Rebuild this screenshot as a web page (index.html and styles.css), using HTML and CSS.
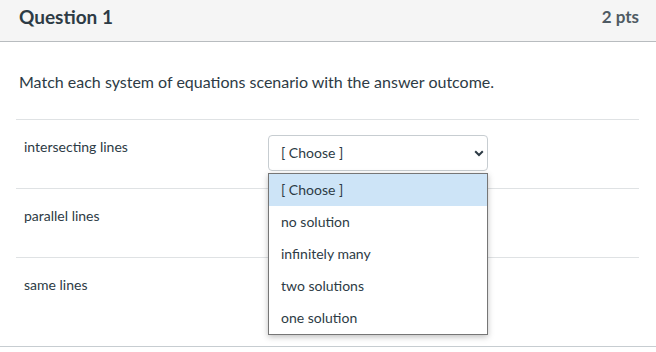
FILE: index.html
```html
<!DOCTYPE html>
<html lang="en">
<head>
    <meta charset="UTF-8">
    <meta name="viewport" content="width=device-width, initial-scale=1.0">
    <title>Question 1</title>
    <link rel="stylesheet" href="styles.css">
</head>
<body>
    <div class="question">
        <div class="question-header">
            <h2>Question 1</h2>
            <span class="points">2 pts</span>
        </div>

        <div class="question-body">
            <p class="question-text">Match each system of equations scenario with the answer outcome.</p>

            <div class="answers">
                <div class="answer-row">
                    <div class="answer-label">intersecting lines</div>
                    <div class="answer-select">
                        <div class="select-box">
                            <span>[ Choose ]</span>
                            <svg class="chevron" width="10" height="7" viewBox="0 0 10 7">
                                <path d="M1.2 1.3 L5 5 L8.8 1.3" fill="none" stroke="#2d3b45" stroke-width="2"/>
                            </svg>
                        </div>
                        <ul class="dropdown">
                            <li class="active">[ Choose ]</li>
                            <li>no solution</li>
                            <li>infinitely many</li>
                            <li>two solutions</li>
                            <li>one solution</li>
                        </ul>
                    </div>
                </div>
                <div class="answer-row">
                    <div class="answer-label">parallel lines</div>
                </div>
                <div class="answer-row">
                    <div class="answer-label">same lines</div>
                </div>
            </div>
        </div>
    </div>
</body>
</html>
```

FILE: styles.css
```css
/* Global styles */
body {
    margin: 0;
    padding: 0;
    font-family: Lato, "Open Sans", sans-serif;
    color: #2d3b45;
    background-color: #fff;
}

.question {
    border-bottom: 1px solid #c7cdd1;
}

/* Header */
.question-header {
    height: 42px;
    box-sizing: border-box;
    padding: 0 17px 0 19px;
    display: flex;
    justify-content: space-between;
    align-items: center;
    background-color: #f5f5f5;
    border-bottom: 1px solid #b8bcbf;
}

.question-header h2 {
    margin: 0;
    font-size: 19px;
    font-weight: bold;
    padding-bottom: 8px;
}

.points {
    font-size: 17px;
    font-weight: bold;
    color: #4e5a63;
    padding-bottom: 8px;
}

/* Body */
.question-body {
    padding: 0 17px 20px 16px;
}

.question-text {
    margin: 0;
    padding: 30px 0 27px 3px;
    font-size: 16px;
    line-height: 20px;
}

.answer-row {
    display: flex;
    height: 68px;
    border-top: 1px solid #dfe2e4;
}

.answer-label {
    width: 244px;
    padding: 18px 0 0 8px;
    font-size: 14px;
    line-height: 17px;
}

.answer-select {
    position: relative;
    padding-top: 15px;
}

.select-box {
    width: 220px;
    height: 36px;
    box-sizing: border-box;
    padding: 0 3px 2px 12px;
    display: flex;
    justify-content: space-between;
    align-items: center;
    border: 1px solid #c7cdd1;
    border-radius: 4px;
    font-size: 14px;
    background-color: #fff;
}

.chevron {
    margin-top: 3px;
}

/* Open dropdown list */
.dropdown {
    position: absolute;
    top: 53px;
    left: 0;
    width: 220px;
    box-sizing: border-box;
    margin: 0;
    padding: 0;
    list-style: none;
    background-color: #fff;
    border: 1px solid #767676;
    box-shadow: 0 2px 6px rgba(0, 0, 0, 0.25);
    z-index: 10;
}

.dropdown li {
    height: 32px;
    box-sizing: border-box;
    padding: 0 0 2px 12px;
    display: flex;
    align-items: center;
    font-size: 14px;
}

.dropdown li.active {
    background-color: #cde4f7;
}
```
